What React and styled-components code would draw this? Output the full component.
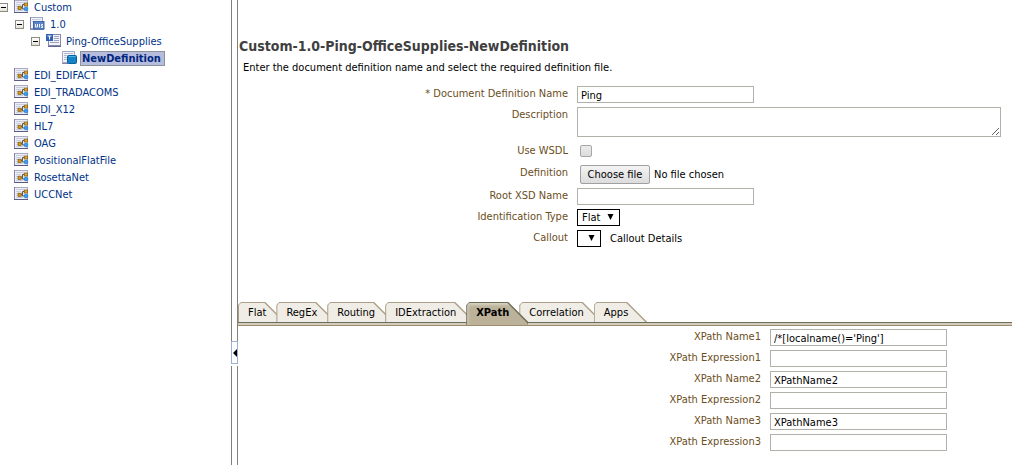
import { useRef, useState } from "react";
import styled, { createGlobalStyle } from "styled-components";

const GlobalStyle = createGlobalStyle`
    *, *::before, *::after {
        box-sizing: border-box;
    }

    body {
        margin: 0;
        background: white;
    }

    body, button, input, select, textarea {
        font-family: "DejaVu Sans Condensed", "DejaVu Sans", sans-serif;
        font-size: 11px;
        line-height: 16px;
        color: black;
    }
`;

const Page = styled.div`
    display: flex;
    min-height: 100vh;
`;

const Sidebar = styled.nav`
    flex: none;
    width: 231px;
    overflow: hidden;
`;

const TreeList = styled.ul`
    margin: 0 0 0 -1px;
    padding: 0;
    list-style: none;
`;

const TreeRow = styled.li`
    display: flex;
    align-items: flex-start;
    height: 17px;
    padding-left: ${(props) => props.$level * 16}px;
`;

const ToggleSlot = styled.span`
    flex: none;
    width: 15px;
    height: 14px;
    display: flex;
    align-items: center;
`;

const Toggle = styled.button`
    width: 9px;
    height: 9px;
    padding: 0;
    border: 1px solid #8c8c80;
    background: linear-gradient(white, #e4e2da);
    display: flex;
    align-items: center;
    justify-content: center;

    &::before {
        content: "";
        width: 5px;
        height: 1px;
        background: black;
    }
`;

const TreeIcon = styled.svg`
    flex: none;
    width: 15px;
    height: 14px;
    margin-right: 5px;
`;

const TreeLink = styled.a`
    color: #003286;
    text-decoration: none;
    white-space: nowrap;
`;

const SelectedLink = styled(TreeLink)`
    height: 15px;
    margin-left: -2px;
    padding: 0 3px 0 1px;
    border: 1px solid #8e9299;
    background: #b5bcdc;
    color: #00267f;
    font-weight: bold;
    line-height: 13px;
`;

const Splitter = styled.div`
    flex: none;
    width: 7px;
    display: flex;
    flex-direction: column;
`;

const SplitterBar = styled.div`
    flex: ${(props) => props.$grow} 0 0;
    border: solid #808080;
    border-width: 0 1px;
`;

const CollapseButton = styled.button`
    height: 23px;
    margin-bottom: 2px;
    padding: 0;
    border: 1px solid #9db0d3;
    background: white;
    display: flex;
    align-items: center;
    justify-content: center;
`;

const Main = styled.main`
    flex: 1;
    min-width: 0;
    padding-top: 36px;
`;

const Title = styled.h1`
    margin: 0 0 4px 1px;
    color: #3f3f3f;
    font-size: 14px;
    line-height: 20px;
`;

const Hint = styled.p`
    margin: 0 0 10px 5px;
`;

const Form = styled.form`
    display: flex;
    flex-direction: column;
    gap: 4px;
`;

const FormRow = styled.div`
    display: grid;
    grid-template-columns: ${(props) => props.$columns || "330fr 435fr"};
    column-gap: 9px;
    align-items: start;
    padding: ${(props) => (props.$padded ? "2px 0" : "0")};
`;

const Label = styled.label`
    color: #6b4e1b;
    text-align: right;
`;

const Field = styled.div`
    display: flex;
    align-items: center;
    gap: ${(props) => props.$gap || 0}px;
    min-height: 16px;
    padding-left: ${(props) => (props.$inset ? 3 : 0)}px;
`;

const TextInput = styled.input`
    width: 177px;
    height: 17px;
    padding: 1px 3px 0;
    border: 1px solid #b1b1a9;
    border-radius: 0;
    background: white;
    outline: none;
`;

const TextArea = styled.textarea`
    display: block;
    width: 424px;
    height: 30px;
    padding: 1px 3px;
    border: 1px solid #b1b1a9;
    outline: none;
`;

const Checkbox = styled.input`
    appearance: none;
    width: 12px;
    height: 12px;
    margin: 0;
    border: 1px solid #a6a6a6;
    border-radius: 2px;
    background: linear-gradient(#ececec, #dcdcdc);

    &:checked {
        background: #7f8fb5;
    }
`;

const FileButton = styled.button`
    width: 70px;
    height: 19px;
    padding: 0;
    border: 1px solid #a0a0a0;
    border-radius: 2px;
    background: linear-gradient(#f4f4f4, #dcdcdc);
    white-space: nowrap;
`;

const SelectBox = styled.span`
    display: grid;
    align-items: center;
    width: ${(props) => props.$width}px;

    & > * {
        grid-area: 1 / 1;
    }

    & > svg {
        justify-self: end;
        margin: 0 6px 2px 0;
        pointer-events: none;
    }
`;

const Select = styled.select`
    appearance: none;
    width: 100%;
    height: 17px;
    padding: 0 4px;
    border: 1px solid black;
    border-radius: 0;
    background: white;
`;

const TabBar = styled.div`
    display: flex;
    height: 24px;
    margin-top: 55px;
    border-bottom: 1px solid #9c8c6c;
    background: linear-gradient(transparent 20px, #6a6f5f 20px 21px, #d3ccba 21px);
`;

const Tab = styled.button`
    position: relative;
    flex: none;
    height: ${(props) => (props.$active ? 23 : 20)}px;
    margin-right: -9px;
    padding: 1px 19px ${(props) => (props.$active ? 3 : 0)}px 10px;
    border: 0;
    background: ${(props) => (props.$active ? "#6f6c5a" : "#ab9f86")};
    clip-path: polygon(0 3px, 3px 0, calc(100% - 20px) 0, 100% 20px, 100% 100%, 0 100%);
    font-weight: ${(props) => (props.$active ? "bold" : "normal")};
    line-height: 20px;
    text-align: left;
    white-space: nowrap;
    z-index: ${(props) => (props.$active ? 1 : 0)};

    &::before {
        content: "";
        position: absolute;
        inset: 0;
        background: ${(props) => (props.$active ? "#bbb299" : "#f0ede6")};
        box-shadow: ${(props) => (props.$active ? "inset 2px 3px 3px #d8d2c2" : "none")};
        clip-path: polygon(1px 3px, 3px 1px, calc(100% - 21px) 1px, calc(100% - 2px) 20px, 100% 100%, 1px 100%);
    }
`;

const TabText = styled.span`
    position: relative;
    display: block;
    height: 19px;
`;

const TabPanel = styled.section`
    display: flex;
    flex-direction: column;
    gap: 4px;
    padding: 3px 0;
`;

const DocumentTypeIcon = () => (
    <TreeIcon viewBox="0 0 15 14" aria-hidden="true">
        <rect x="0.5" y="0.5" width="13" height="12" fill="#eceef6" stroke="#a9aac4" />
        <path d="M0.5 0v13" stroke="#8382a8" />
        <path d="M0 12.500h14" stroke="#5d5c80" />
        <path d="M2 2.500h8M2 4.500h5M2 6.500h2M2 8.500h2M2 10.500h7" stroke="#c9cddd" />
        <path d="M6 7.500h2.500V4.500H11M8.500 7.500v1.500H11" fill="none" stroke="#555" />
        <rect x="4" y="6.200" width="3.200" height="3.200" fill="#d29a1d" stroke="#7d5610" strokeWidth="0.7" />
        <rect x="10.200" y="3" width="3.200" height="3" fill="#e3a92b" stroke="#7d5610" strokeWidth="0.7" />
        <circle cx="12" cy="9" r="1.900" fill="#3aa0f0" stroke="#1c6fc4" strokeWidth="0.6" />
    </TreeIcon>
);

const VersionIcon = () => (
    <TreeIcon viewBox="0 0 15 14" aria-hidden="true">
        <rect x="0.5" y="0.5" width="12" height="11" fill="#f3f4fa" stroke="#a3a3c2" />
        <path d="M0.500 0v13M0 12.500h14" stroke="#8382a8" />
        <path d="M2 2.500h9M2 4.500h1" stroke="#c9cddd" />
        <rect x="3.500" y="4.500" width="10.500" height="7.500" fill="#5d84c6" stroke="#3c64a8" />
        <path d="M5.500 7v3h2V7M9.500 7v3.500M13 7.500H11.500v1.500h1v1.500H11" fill="none" stroke="white" strokeWidth="0.9" />
    </TreeIcon>
);

const DefinitionsIcon = () => (
    <TreeIcon viewBox="0 0 15 14" aria-hidden="true">
        <rect x="2.500" y="0.500" width="12" height="11" fill="#f3f4fa" stroke="#8886ad" />
        <path d="M8 2.500h5M8 4.500h5M8 6.500h5M4 8.500h9" stroke="#9da2c0" />
        <rect x="0" y="0" width="7" height="7" fill="#3161b5" />
        <path d="M1.500 2h4M3.500 2v3.500" stroke="white" />
        <path d="M2 12.500h13" stroke="#666590" />
    </TreeIcon>
);

const DefinitionIcon = () => (
    <TreeIcon viewBox="0 0 15 14" aria-hidden="true">
        <path d="M0.500 0.500h12v11h-12z" fill="#f3f4fa" stroke="#a3a7bd" />
        <path d="M2 2.500h9M2 4.500h3M2 6.500h3M2 8.500h3" stroke="#b4b9cc" />
        <path d="M0 12.500h6" stroke="#8886ad" />
        <rect x="5.500" y="4.500" width="9" height="8" rx="1" fill="#1583c4" stroke="#0b5f9c" />
        <path d="M7 5.500h6.500" stroke="#4fb0e4" />
    </TreeIcon>
);

const SelectArrow = () => (
    <svg width="7" height="6" viewBox="0 0 7 6" aria-hidden="true">
        <path d="M0.500 0h6L3.500 6z" fill="black" />
    </svg>
);

const tree = [
    { label: "Custom", level: 0, icon: DocumentTypeIcon, open: true },
    { label: "1.0", level: 1, icon: VersionIcon, open: true },
    { label: "Ping-OfficeSupplies", level: 2, icon: DefinitionsIcon, open: true },
    { label: "NewDefinition", level: 3, icon: DefinitionIcon, selected: true },
    { label: "EDI_EDIFACT", level: 0, icon: DocumentTypeIcon },
    { label: "EDI_TRADACOMS", level: 0, icon: DocumentTypeIcon },
    { label: "EDI_X12", level: 0, icon: DocumentTypeIcon },
    { label: "HL7", level: 0, icon: DocumentTypeIcon },
    { label: "OAG", level: 0, icon: DocumentTypeIcon },
    { label: "PositionalFlatFile", level: 0, icon: DocumentTypeIcon },
    { label: "RosettaNet", level: 0, icon: DocumentTypeIcon },
    { label: "UCCNet", level: 0, icon: DocumentTypeIcon }
];

const tabs = ["Flat", "RegEx", "Routing", "IDExtraction", "XPath", "Correlation", "Apps"];

const xpathFields = [
    { label: "XPath Name1", value: "/*[localname()='Ping']" },
    { label: "XPath Expression1", value: "" },
    { label: "XPath Name2", value: "XPathName2" },
    { label: "XPath Expression2", value: "" },
    { label: "XPath Name3", value: "XPathName3" },
    { label: "XPath Expression3", value: "" }
];

const DocumentTree = () => (
    <Sidebar aria-label="Document definitions">
        <TreeList>
            {tree.map((item) => {
                const Icon = item.icon;
                const ItemLink = item.selected ? SelectedLink : TreeLink;
                return (
                    <TreeRow key={item.label} $level={item.level}>
                        <ToggleSlot>
                            {item.open ? <Toggle type="button" aria-label={`Collapse ${item.label}`} /> : null}
                        </ToggleSlot>
                        <Icon />
                        <ItemLink href="#">{item.label}</ItemLink>
                    </TreeRow>
                );
            })}
        </TreeList>
    </Sidebar>
);

const DefinitionForm = () => {
    const fileInput = useRef(null);
    const [fileName, setFileName] = useState("No file chosen");

    return (
        <Form>
            <FormRow>
                <Label htmlFor="name">* Document Definition Name</Label>
                <TextInput id="name" defaultValue="Ping" />
            </FormRow>
            <FormRow>
                <Label htmlFor="description">Description</Label>
                <TextArea id="description" />
            </FormRow>
            <FormRow $padded>
                <Label htmlFor="wsdl">Use WSDL</Label>
                <Field $inset>
                    <Checkbox id="wsdl" type="checkbox" />
                </Field>
            </FormRow>
            <FormRow>
                <Label htmlFor="definition">Definition</Label>
                <Field $inset $gap={4}>
                    <FileButton id="definition" type="button" onClick={() => fileInput.current.click()}>
                        Choose file
                    </FileButton>
                    <span>{fileName}</span>
                    <input
                        ref={fileInput}
                        type="file"
                        hidden
                        onChange={(e) => setFileName(e.target.files[0]?.name || "No file chosen")}
                    />
                </Field>
            </FormRow>
            <FormRow>
                <Label htmlFor="xsd">Root XSD Name</Label>
                <TextInput id="xsd" />
            </FormRow>
            <FormRow>
                <Label htmlFor="type">Identification Type</Label>
                <SelectBox $width={43}>
                    <Select id="type" defaultValue="Flat">
                        <option>Flat</option>
                        <option>XML</option>
                    </Select>
                    <SelectArrow />
                </SelectBox>
            </FormRow>
            <FormRow>
                <Label htmlFor="callout">Callout</Label>
                <Field $gap={9}>
                    <SelectBox $width={24}>
                        <Select id="callout">
                            <option></option>
                        </Select>
                        <SelectArrow />
                    </SelectBox>
                    <span>Callout Details</span>
                </Field>
            </FormRow>
        </Form>
    );
};

const App = () => {
    const [activeTab, setActiveTab] = useState("XPath");

    return (
        <>
            <GlobalStyle />
            <Page>
                <DocumentTree />
                <Splitter>
                    <SplitterBar $grow={31} />
                    <CollapseButton type="button" aria-label="Collapse pane">
                        <svg width="4" height="8" viewBox="0 0 4 8" aria-hidden="true">
                            <path d="M4 0v8L0 4z" fill="black" />
                        </svg>
                    </CollapseButton>
                    <SplitterBar $grow={9} />
                </Splitter>
                <Main>
                    <Title>Custom-1.0-Ping-OfficeSupplies-NewDefinition</Title>
                    <Hint>Enter the document definition name and select the required definition file.</Hint>
                    <DefinitionForm />
                    <TabBar role="tablist">
                        {tabs.map((tab) => (
                            <Tab
                                key={tab}
                                type="button"
                                role="tab"
                                aria-selected={tab === activeTab}
                                $active={tab === activeTab}
                                onClick={() => setActiveTab(tab)}
                            >
                                <TabText>{tab}</TabText>
                            </Tab>
                        ))}
                    </TabBar>
                    <TabPanel role="tabpanel">
                        {xpathFields.map((field) => (
                            <FormRow key={field.label} $columns="523fr 242fr">
                                <Label htmlFor={field.label}>{field.label}</Label>
                                <TextInput id={field.label} defaultValue={field.value} />
                            </FormRow>
                        ))}
                    </TabPanel>
                </Main>
            </Page>
        </>
    );
};

export default App;
